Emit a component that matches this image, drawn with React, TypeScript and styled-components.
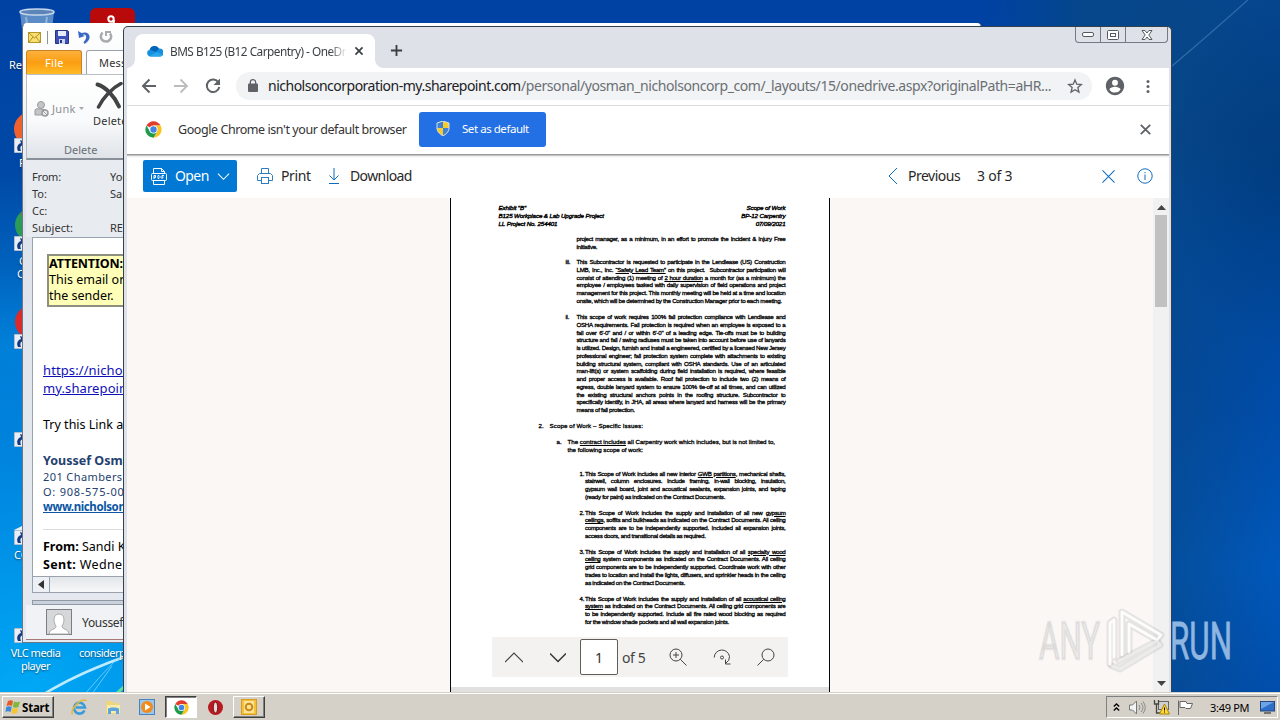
import { ReactNode } from "react";
import styled, { createGlobalStyle } from "styled-components";

const GlobalStyle = createGlobalStyle`
    * {
        box-sizing: border-box;
    }

    body {
        margin: 0;
        overflow: hidden;
        font-family: "Noto Sans", "Open Sans", sans-serif;
    }

    svg {
        display: block;
        flex: none;
    }
`;

const Screen = styled.div`
    position: relative;
    display: flex;
    flex-direction: column;
    width: 1280px;
    height: 720px;
    overflow: hidden;
`;

const Desktop = styled.div`
    position: relative;
    flex: 1;
    overflow: hidden;
    background:
        radial-gradient(ellipse 500px 420px at 2% 100%, #00a8f5 0%, #0097eccc 45%, #0080da00 100%),
        linear-gradient(180deg, #0042a4 0%, #0049a6 25%, #0078d2 50%, #0058bd 75%, #0058bd 100%);
`;

const RightWallpaper = styled.div`
    position: absolute;
    top: 0;
    left: 980px;
    right: 0;
    bottom: 0;
    background:
        radial-gradient(ellipse 110px 180px at 100% 25%, #00397aaa 0%, #00397a00 100%),
        linear-gradient(90deg, #00469400 0%, #09478488 65%, #04448400 100%),
        linear-gradient(180deg, #04468f 0%, #044389 20%, #00489c 33%, #004caa 60%, #0058bb 82%, #004ead 100%);
    mask-image: linear-gradient(90deg, transparent 0, #000 100px);
`;

const Swoosh = styled.svg`
    position: absolute;
    left: 0;
    top: 0;
`;

/* items placed freely on the desktop */
const DesktopItem = styled.div<{ $x: number; $y: number }>`
    position: absolute;
    left: ${(p) => p.$x}px;
    top: ${(p) => p.$y}px;
`;

const DesktopLabel = styled.div<{ $w?: number; $ls?: number }>`
    width: ${(p) => (p.$w ? p.$w + "px" : "auto")};
    color: #fff;
    font-size: 11px;
    line-height: 13px;
    letter-spacing: ${(p) => p.$ls || 0}px;
    text-align: center;
    white-space: nowrap;
    text-shadow: 0 1px 2px #0008;
`;

const Label = styled.span<{ $w?: number; $size?: number; $color?: string; $ls?: number; $bold?: boolean }>`
    flex: none;
    width: ${(p) => (p.$w ? p.$w + "px" : "auto")};
    font-size: ${(p) => p.$size || 12}px;
    color: ${(p) => p.$color || "#333"};
    letter-spacing: ${(p) => p.$ls || 0}px;
    font-weight: ${(p) => (p.$bold ? 700 : 400)};
    white-space: nowrap;
`;

/* ---------- mail window ---------- */

const MailWindow = styled.div`
    position: absolute;
    left: 22px;
    top: 23px;
    width: 960px;
    height: 620px;
    display: flex;
    flex-direction: column;
    padding: 0 3px 2px;
    border: 1px solid #6c7684;
    border-top-color: #fff;
    border-radius: 5px 5px 0 0;
    background: linear-gradient(180deg, #fff 0%, #f8f9fb 8%, #dee3eb 30%, #e6e9ef 100%);
    overflow: hidden;
`;

const QuickBar = styled.div`
    display: flex;
    align-items: center;
    height: 26px;
    padding-left: 2px;
`;

const QuickDivider = styled.div`
    width: 1px;
    height: 13px;
    margin: 0 7px 0 6px;
    background: #8b929b;
`;

const RibbonTabs = styled.div`
    display: flex;
    height: 24px;
    gap: 4px;
`;

const RibbonTab = styled.div<{ $file?: boolean }>`
    width: ${(p) => (p.$file ? 56 : 80)}px;
    padding: 3px 0 0 ${(p) => (p.$file ? 18 : 12)}px;
    border: 1px solid ${(p) => (p.$file ? "#c8822a" : "#9aa1ab")};
    border-bottom: 0;
    border-radius: 3px 3px 0 0;
    background: ${(p) => (p.$file ? "linear-gradient(180deg, #fdb13c 0%, #fb9d12 50%, #ffbb25 100%)" : "#fff")};
    line-height: 15px;
`;

const Ribbon = styled.div`
    display: flex;
    flex-direction: column;
    height: 86px;
    border-top: 1px solid #b9bec6;
    border-left: 1px solid #b9bec6;
    border-bottom: 2px solid #8a9099;
    background: linear-gradient(180deg, #fff 0%, #f9fafb 55%, #dfe3e8 100%);
`;

const RibbonRow = styled.div`
    display: flex;
    height: 68px;
    padding-left: 7px;
`;

const JunkButton = styled.div`
    display: flex;
    align-items: center;
    gap: 3px;
    width: 59px;
`;

const DeleteButton = styled.div`
    display: flex;
    flex-direction: column;
    padding-top: 7px;
    line-height: 16px;

    svg {
        margin: 0 0 3px 2px;
    }
`;

const GroupName = styled.div`
    padding-left: 37px;
    line-height: 16px;

    span {
        display: block;
    }
`;

const HeaderFields = styled.div`
    height: 77px;
    padding: 8px 0 0 6px;
    background: #e8ebf0;
`;

const FieldRow = styled.div`
    display: flex;
    line-height: 17px;
`;

const MailBody = styled.div`
    display: flex;
    flex-direction: column;
    height: 340px;
    margin-left: 6px;
    padding: 16px 0 0 10px;
    border: 1px solid #9aa2ae;
    background: #fff;
`;

const Attention = styled.div`
    display: flex;
    flex-direction: column;
    width: 500px;
    height: 53px;
    margin-left: 4px;
    border: 2px solid #8f8f80;
    background: #ffffb8;
    line-height: 16px;
`;

const MailLine = styled.div<{ $h: number; $mt?: number; $link?: boolean }>`
    height: ${(p) => p.$h}px;
    margin-top: ${(p) => p.$mt || 0}px;
    line-height: ${(p) => p.$h}px;
    white-space: nowrap;

    span {
        text-decoration: ${(p) => (p.$link ? "underline" : "none")};
    }
`;

const MailRule = styled.div`
    height: 1px;
    margin: 16px 0 6px;
    background: #ddd;
`;

const MailScroll = styled.div`
    display: flex;
    height: 16px;
    margin-left: 6px;
    border: 1px solid #9aa2ae;
    border-top: 0;
    background: linear-gradient(180deg, #e2e5e9, #f7f8f9);
`;

const MailScrollButton = styled.div`
    display: flex;
    align-items: center;
    justify-content: center;
    width: 17px;
    border-right: 1px solid #9aa2ae;
    background: #edf0f4;
`;

const MailSplitter = styled.div`
    height: 5px;
    margin: 7px 0 0 6px;
    border: 1px solid #8f98a6;
    background: #cbd1db;
`;

const PeoplePane = styled.div`
    display: flex;
    flex: 1;
    align-items: center;
    gap: 10px;
    padding-left: 20px;
    border-bottom: 1px solid #a77;
    background: #f0f2f5;
`;

/* ---------- browser window ---------- */

const BrowserWindow = styled.div`
    position: absolute;
    left: 123px;
    top: 26px;
    width: 1049px;
    height: 667px;
    display: flex;
    flex-direction: column;
    padding: 0 2px 0 3px;
    border: 1px solid #33414e;
    border-bottom: 0;
    border-radius: 5px 5px 0 0;
    background: #dee1e7;
    overflow: hidden;
`;

const TabStrip = styled.div`
    display: flex;
    align-items: flex-end;
    height: 41px;
    padding-left: 8px;
`;

const BrowserTab = styled.div`
    position: relative;
    display: flex;
    align-items: center;
    width: 240px;
    height: 34px;
    padding: 0 11px 1px 12px;
    border-radius: 8px 8px 0 0;
    background: #fff;

    &::before,
    &::after {
        content: "";
        position: absolute;
        bottom: 0;
        width: 8px;
        height: 8px;
    }

    &::before {
        left: -8px;
        background: radial-gradient(circle at 0 0, transparent 7.5px, #fff 8px);
    }

    &::after {
        right: -8px;
        background: radial-gradient(circle at 100% 0, transparent 7.5px, #fff 8px);
    }
`;

const TabTitle = styled.div`
    width: 177px;
    margin: 0 7px 0 7px;
    overflow: hidden;
    font-size: 11.8px;
    letter-spacing: -0.5px;
    color: #3c4043;
    white-space: nowrap;
    mask-image: linear-gradient(90deg, #000 160px, transparent 177px);
`;

const NewTab = styled.div`
    padding: 0 0 11px 15px;
`;

const Captions = styled.div`
    display: flex;
    align-self: flex-start;
    height: 16px;
    margin: 0 1px 0 auto;
    border: 1px solid #737a83;
    border-top: 0;
    border-radius: 0 0 4px 4px;
`;

const Caption = styled.div<{ $w: number }>`
    display: flex;
    align-items: center;
    justify-content: center;
    width: ${(p) => p.$w}px;

    & + & {
        border-left: 1px solid #737a83;
    }
`;

const NavBar = styled.div`
    display: flex;
    align-items: center;
    height: 38px;
    padding: 0 13px 2px 14px;
    border-bottom: 1px solid #d9dbde;
    background: #fff;
`;

const NavIcons = styled.div`
    display: flex;
    gap: 16px;
    margin-right: 15px;
`;

const Omnibox = styled.div`
    display: flex;
    align-items: center;
    width: 856px;
    height: 28px;
    margin-right: 12px;
    padding: 0 9px 0 12px;
    border-radius: 14px;
    background: #f1f3f4;
`;

const Url = styled.div`
    display: flex;
    flex: 1;
    margin-left: 10px;
`;

const InfoBar = styled.div`
    display: flex;
    align-items: center;
    height: 48px;
    padding: 0 18px 2px 18px;
    background: #fff;
`;

const DefaultButton = styled.div`
    display: flex;
    align-items: center;
    gap: 12px;
    width: 127px;
    height: 35px;
    margin-right: auto;
    padding: 0 0 1px 17px;
    border-radius: 3px;
    background: #2370e5;
`;

const BarShadow = styled.div`
    height: 4px;
    background: linear-gradient(180deg, #929496 0, #a5a7a9 30%, #ededed 50%, #fff 100%);
`;

const CommandBar = styled.div`
    display: flex;
    align-items: center;
    height: 40px;
    padding: 0 16px 4px;
    background: #fff;

    span {
        padding-bottom: 1px;
    }
`;

const OpenButton = styled.div`
    display: flex;
    align-items: center;
    width: 94px;
    height: 32px;
    margin-right: 20px;
    padding-left: 8px;
    border-radius: 2px;
    background: #0078d4;
`;

const Command = styled.div<{ $gap: number; $mr?: number; $ml?: number }>`
    display: flex;
    align-items: center;
    gap: ${(p) => p.$gap}px;
    margin-right: ${(p) => p.$mr || 0}px;
    margin-left: ${(p) => p.$ml || 0}px;
`;

const Spacer = styled.div`
    flex: 1;
`;

const Viewer = styled.div`
    position: relative;
    display: flex;
    flex: 1;
    justify-content: center;
    background: #faf7f5;
    overflow: hidden;
`;

const Page = styled.div`
    width: 380px;
    height: 495px;
    margin-left: -17px;
    padding: 6px 43px 0 48px;
    border: solid #0a0a0a;
    border-width: 0 1px 0 1.5px;
    background: linear-gradient(180deg, #fff 489px, #e1e0df 489px);
    font-family: "Liberation Sans", Arial, sans-serif;
    font-size: 6.2px;
    line-height: 7.75px;
    color: #000;
    -webkit-text-stroke: 0.3px #000;
`;

const PageHead = styled.div`
    display: flex;
    justify-content: space-between;
    height: 24px;
    font-style: italic;
    line-height: 8px;
    letter-spacing: -0.12px;
    -webkit-text-stroke: 0.4px #000;

    div:last-child {
        text-align: right;
    }
`;

const Clause = styled.div<{ $mt: number; $left: number; $num: number; $ls?: number }>`
    display: flex;
    margin: ${(p) => p.$mt}px 0 0 ${(p) => p.$left}px;
    letter-spacing: ${(p) => (p.$ls === undefined ? -0.3 : p.$ls)}px;

    > div:first-child {
        flex: none;
        width: ${(p) => p.$num}px;
    }

    > div:last-child {
        flex: 1;
        min-width: 0;
    }
`;

const TextLine = styled.div<{ $last?: boolean }>`
    height: 7.75px;
    text-align: justify;
    text-align-last: ${(p) => (p.$last ? "left" : "justify")};
    white-space: nowrap;
`;

const PageTools = styled.div`
    position: absolute;
    left: 365px;
    top: 439px;
    display: flex;
    align-items: center;
    width: 296px;
    height: 40px;
    padding-left: 13px;
    background: #f3f2f1;
`;

const PageInput = styled.div`
    display: flex;
    align-items: center;
    justify-content: center;
    width: 38px;
    height: 36px;
    margin: 0 4px 0 14px;
    border: 1px solid #605e5c;
    border-radius: 2px;
    background: #fff;
    font-size: 14px;
    color: #323130;
`;

const ScrollTrack = styled.div`
    position: absolute;
    right: 0;
    top: 0;
    display: flex;
    flex-direction: column;
    align-items: center;
    width: 16px;
    height: 495px;
    padding: 7px 0;
    background: #f1f1f1;
`;

const ScrollThumb = styled.div`
    width: 12px;
    height: 92px;
    margin: 5px 0 auto;
    background: #c1c1c1;
`;

/* ---------- taskbar ---------- */

const Taskbar = styled.div`
    position: relative;
    display: flex;
    align-items: center;
    height: 28px;
    padding: 1px 2px 0 2px;
    border-top: 1px solid #d4d0c8;
    box-shadow: inset 0 1px #fff;
    background: #d5d0c8;
`;

const StartButton = styled.div`
    display: flex;
    align-items: center;
    gap: 1px;
    width: 52px;
    height: 22px;
    padding-left: 2px;
    border: 1px solid;
    border-color: #fff #404040 #404040 #fff;
    box-shadow: inset -1px -1px #808080;
`;

const TaskButton = styled.div<{ $state?: "active" | "raised" }>`
    display: flex;
    align-items: center;
    justify-content: center;
    width: 32px;
    height: 22px;
    margin-left: 2px;
    border: 1px solid transparent;
    ${(p) => p.$state === "active" && "background: #fff; border-color: #404040 #fff #fff #404040; box-shadow: inset 1px 1px #808080;"}
    ${(p) => p.$state === "raised" && "border-color: #fff #404040 #404040 #fff; box-shadow: inset -1px -1px #808080;"}
`;

const TaskList = styled.div`
    display: flex;
    margin: 0 auto 0 7px;
`;

const Tray = styled.div`
    display: flex;
    align-items: center;
    width: 172px;
    height: 22px;
    padding-left: 6px;
    border: 1px solid;
    border-color: #808080 #fff #fff #808080;

    svg {
        margin-right: 7px;
    }
`;

const Watermark = styled.svg`
    position: absolute;
    left: 1030px;
    top: 600px;
`;

function Chevron({ d, size = 14, color = "#0f6cbd", w = 1.1 }: { d: string; size?: number; color?: string; w?: number }) {
    return (
        <svg width={size} height={size} viewBox="0 0 14 14" fill="none" stroke={color} strokeWidth={w}>
            <path d={d} />
        </svg>
    );
}

function ChromeLogo({ size }: { size: number }) {
    return (
        <svg width={size} height={size} viewBox="0 0 48 48">
            <circle cx="24" cy="24" r="23" fill="#fff" />
            <path d="M24 24 4.1 12.5A23 23 0 0 1 43.9 12.5H24z" fill="#e33b2e" />
            <path d="M24 12.5h19.9A23 23 0 0 1 24 47l10-17.2z" fill="#fcc31e" />
            <path d="M4.1 12.5 14 29.8 24 35.5 34 29.8 24 47A23 23 0 0 1 4.1 12.5z" fill="#1e9a4b" />
            <circle cx="24" cy="24" r="11.5" fill="#fff" />
            <circle cx="24" cy="24" r="9" fill="#4285e8" />
        </svg>
    );
}

function ShortcutArrow() {
    return (
        <svg width="14" height="15" viewBox="0 0 14 15">
            <path d="M0 0h14v15H0z" fill="#e8eef5" stroke="#7790aa" />
            <path d="M4 13c-2-4 0-7 3-8L6 2l6 2-2 6-1-3c-3 1-3 3-2 6z" fill="#123a82" />
        </svg>
    );
}

function DesktopIcons() {
    return (
        <>
            <DesktopItem $x={19} $y={8}>
                <svg width="37" height="30" viewBox="0 0 37 30">
                    <path d="M1 4l3 26h28l3-26z" fill="#7ba4d2" opacity=".75" />
                    <ellipse cx="18" cy="4" rx="17" ry="3" fill="#5d85b8" stroke="#c4d7ec" strokeWidth="1.5" />
                    <path d="M7 9l3 20M28 9l-3 20" stroke="#b4d0ec" strokeWidth="2" opacity=".6" />
                </svg>
            </DesktopItem>
            <DesktopItem $x={90} $y={8}>
                <svg width="45" height="30" viewBox="0 0 45 30">
                    <rect width="45" height="34" rx="6" fill="#b80a0a" />
                    <circle cx="21" cy="11" r="2.7" fill="none" stroke="#fff" strokeWidth="2" />
                    <path d="M24 12c0 4-1 5-4 6" fill="none" stroke="#fff" strokeWidth="2" />
                </svg>
            </DesktopItem>
            <DesktopItem $x={9} $y={58}><DesktopLabel>Recycle</DesktopLabel></DesktopItem>
            <DesktopItem $x={14} $y={112}>
                <svg width="28" height="34" viewBox="0 0 28 34"><circle cx="17" cy="17" r="17" fill="#f0622d" /></svg>
            </DesktopItem>
            <DesktopItem $x={14} $y={138}><ShortcutArrow /></DesktopItem>
            <DesktopItem $x={19} $y={156}><DesktopLabel>Firefox</DesktopLabel></DesktopItem>
            <DesktopItem $x={15} $y={208}>
                <svg width="28" height="34" viewBox="0 0 28 34">
                    <circle cx="17" cy="17" r="17" fill="#2b9c57" />
                    <path d="M5 6l12-6v10z" fill="#c94b36" />
                </svg>
            </DesktopItem>
            <DesktopItem $x={14} $y={236}><ShortcutArrow /></DesktopItem>
            <DesktopItem $x={19} $y={254}><DesktopLabel>Google</DesktopLabel></DesktopItem>
            <DesktopItem $x={17} $y={267}><DesktopLabel>Chrome</DesktopLabel></DesktopItem>
            <DesktopItem $x={15} $y={305}>
                <svg width="28" height="34" viewBox="0 0 28 34"><circle cx="17" cy="17" r="17" fill="#d92b2b" /></svg>
            </DesktopItem>
            <DesktopItem $x={14} $y={334}><ShortcutArrow /></DesktopItem>
            <DesktopItem $x={14} $y={432}><ShortcutArrow /></DesktopItem>
            <DesktopItem $x={14} $y={524}>
                <svg width="14" height="8" viewBox="0 0 14 8"><path d="M0 6l10-5v7z" fill="#e8eef5" /></svg>
            </DesktopItem>
            <DesktopItem $x={14} $y={530}><ShortcutArrow /></DesktopItem>
            <DesktopItem $x={14} $y={548}><DesktopLabel>CCleaner</DesktopLabel></DesktopItem>
            <DesktopItem $x={14} $y={628}><ShortcutArrow /></DesktopItem>
            <DesktopItem $x={5} $y={646}><DesktopLabel $w={61} $ls={-0.5}>VLC media<br />player</DesktopLabel></DesktopItem>
            <DesktopItem $x={79} $y={646}><DesktopLabel $ls={-0.55}>considerpay</DesktopLabel></DesktopItem>
        </>
    );
}

function Mail() {
    return (
        <MailWindow>
            <QuickBar>
                <svg width="13" height="11" viewBox="0 0 13 11">
                    <rect x=".5" y=".5" width="12" height="10" fill="#f8df72" stroke="#b59428" />
                    <path d="M1 1l5.500 5L12 1M1 10l4-5M12 10L8 5" fill="none" stroke="#b08d22" />
                </svg>
                <QuickDivider />
                <svg width="14" height="14" viewBox="0 0 14 14">
                    <path d="M.5.500h12l1 1v12H.5z" fill="#3f51b8" stroke="#26357f" />
                    <path d="M3 1h8v5H3z" fill="#e7ecfa" />
                    <path d="M4 9h6v5H4z" fill="#cdd5f0" />
                    <path d="M5 10h2v3H5z" fill="#26357f" />
                </svg>
                <svg width="14" height="14" viewBox="0 0 14 14" style={{ marginLeft: 8 }}>
                    <path d="M1 1l1 7 6-2-2.500-1c3-2 6 2 1 7l1 2c9-5 5-14-3-11z" fill="#3c68c4" />
                </svg>
                <svg width="14" height="14" viewBox="0 0 14 14" style={{ marginLeft: 8 }} fill="none" stroke="#a9abae" strokeWidth="2.500">
                    <path d="M3.500 2.500c-4 5 0 9 3.500 9s7-4 4-8" />
                    <path d="M7 6V2h5" strokeWidth="2" />
                </svg>
            </QuickBar>
            <RibbonTabs>
                <RibbonTab $file><Label $size={11} $color="#fff" $ls={0.3}>File</Label></RibbonTab>
                <RibbonTab><Label $size={11} $ls={0.2}>Message</Label></RibbonTab>
            </RibbonTabs>
            <Ribbon>
                <RibbonRow>
                    <JunkButton>
                        <svg width="15" height="16" viewBox="0 0 15 16" fill="#c4c5c7" stroke="#999b9d">
                            <circle cx="7" cy="4" r="3.500" />
                            <path d="M1 14V9c1-2 3-1 6-1l5 1v5z" />
                            <circle cx="11" cy="12" r="3" fill="#eee" strokeWidth="1.500" />
                            <path d="M9 10l4 4" />
                        </svg>
                        <Label $size={11} $color="#8c8f94" $ls={0.3}>Junk</Label>
                        <svg width="5" height="3" viewBox="0 0 5 3"><path d="M0 0h5L2.500 3z" fill="#aaa" /></svg>
                    </JunkButton>
                    <DeleteButton>
                        <svg width="29" height="28" viewBox="0 0 29 28" fill="none" stroke="#414345" strokeLinecap="round">
                            <path d="M2.500 2.500C11 5 20 15 24 24.500" strokeWidth="4" />
                            <path d="M26 1.500C17 6 8 16 3.500 25" strokeWidth="3.500" />
                        </svg>
                        <Label $size={11} $ls={0.2}>Delete</Label>
                    </DeleteButton>
                </RibbonRow>
                <GroupName><Label $size={11} $color="#6a6f77" $ls={0}>Delete</Label></GroupName>
            </Ribbon>
            <HeaderFields>
                <FieldRow><Label $size={11} $w={78} $ls={-0.2}>From:</Label><Label $size={11}>Youssef Osman</Label></FieldRow>
                <FieldRow><Label $size={11} $w={78}>To:</Label><Label $size={11}>Sandi King</Label></FieldRow>
                <FieldRow><Label $size={11}>Cc:</Label></FieldRow>
                <FieldRow><Label $size={11} $w={78}>Subject:</Label><Label $size={11}>RE: BMS</Label></FieldRow>
            </HeaderFields>
            <MailBody>
                <Attention>
                    <Label $size={12.5} $color="#000" $bold $ls={-0.15}>ATTENTION:</Label>
                    <Label $size={12.5} $color="#000">This email originated</Label>
                    <Label $size={12.5} $color="#000">the sender.</Label>
                </Attention>
                <MailLine $h={18} $mt={53} $link><Label $size={13} $color="#1010b8" $ls={0.1}>https://nicholsoncorp</Label></MailLine>
                <MailLine $h={18} $link><Label $size={13} $color="#1010b8" $ls={0.1}>my.sharepoint.com</Label></MailLine>
                <MailLine $h={18} $mt={18}><Label $size={12.5} $color="#000">Try this Link and</Label></MailLine>
                <MailLine $h={18} $mt={18}><Label $size={12.5} $color="#24416f" $bold>Youssef Osman</Label></MailLine>
                <MailLine $h={15}><Label $size={11} $color="#24416f" $ls={0.4}>201 Chambers Brook</Label></MailLine>
                <MailLine $h={15}><Label $size={11} $color="#24416f" $ls={0.75}>O: 908-575-0020</Label></MailLine>
                <MailLine $h={15} $link><Label $size={11.5} $color="#0b57a4" $bold $ls={-0.4}>www.nicholsoncorp.com</Label></MailLine>
                <MailRule />
                <MailLine $h={18}><Label $size={12.500} $color="#000"><b>From:</b> Sandi King</Label></MailLine>
                <MailLine $h={18}><Label $size={12.500} $color="#000" $ls={0.35}><b>Sent:</b> Wednesday</Label></MailLine>
            </MailBody>
            <MailScroll>
                <MailScrollButton>
                    <svg width="6" height="9" viewBox="0 0 6 9"><path d="M6 0v9L0 4.500z" fill="#333" /></svg>
                </MailScrollButton>
            </MailScroll>
            <MailSplitter />
            <PeoplePane>
                <svg width="26" height="26" viewBox="0 0 26 26">
                    <rect x=".5" y=".5" width="25" height="25" fill="#d5d7d9" stroke="#7a7e83" />
                    <path d="M3 25c1-6 7-4 7-8-3-4-3-12 3-12s6 8 3 12c0 4 6 2 7 8z" fill="#fff" stroke="#aaa" />
                </svg>
                <Label $size={12} $ls={-0.3}>Youssef Osman</Label>
            </PeoplePane>
        </MailWindow>
    );
}

type Block = { mt: number; left: number; num: number; mark?: string; lines: ReactNode[]; loose?: boolean; ls?: number };

const blocks: Block[] = [
    {
        mt: 7, left: 78, num: 0,
        lines: ["project manager, as a minimum, in an effort to promote the Incident & Injury Free", "initiative."],
    },
    {
        mt: 7.5, left: 67, num: 11, mark: "iii.",
        lines: [
            "This Subcontractor is requested to participate in the Lendlease (US) Construction",
            <>LMB, Inc., Inc. <u>“Safety Lead Team”</u> on this project.&nbsp; Subcontractor participation will</>,
            <>consist of attending (1) meeting of <u>2 hour duration</u> a month for (as a minimum) the</>,
            "employee / employees tasked with daily supervision of field operations and project",
            "management for this project.  This monthly meeting will be held at a time and location",
            "onsite, which will be determined by the Construction Manager prior to each meeting.",
        ],
    },
    {
        mt: 8.5, left: 67, num: 11, mark: "ii.",
        lines: [
            "This scope of work requires 100% fall protection compliance with Lendlease and",
            "OSHA requirements.  Fall protection is required when an employee is exposed to a",
            "fall over 6'-0\" and / or within 6'-0\" of a leading edge.  Tie-offs must be to building",
            "structure and fall / swing radiuses must be taken into account before use of lanyards",
            "is utilized. Design, furnish and install a engineered, certified by a licensed New Jersey",
            "professional engineer; fall protection system complete with attachments to existing",
            "building structural system, compliant with OSHA standards. Use of an articulated",
            "man-lift(s) or system scaffolding during field installation is required, where feasible",
            "and proper access is available.  Roof fall protection to include two (2) means of",
            "egress, double lanyard system to ensure 100% tie-off at all times, and can utilized",
            "the existing structural anchors points in the roofing structure.  Subcontractor to",
            "specifically identify, in JHA, all areas where lanyard and harness will be the primary",
            "means of fall protection.",
        ],
    },
    { mt: 8.2, left: 40, num: 11, mark: "2.", loose: true, ls: 0.1, lines: ["Scope of Work – Specific Issues:"] },
    {
        mt: 8.2, left: 58, num: 11, mark: "a.", loose: true, ls: -0.02,
        lines: [<>The <u>contract includes</u> all Carpentry work which includes, but is not limited to,</>, "the following scope of work:"],
    },
    {
        mt: 16.2, left: 81, num: 5.5, mark: "1.",
        lines: [
            <>This Scope of Work includes all new interior <u>GWB partitions</u>, mechanical shafts,</>,
            "stairwell, column enclosures.  Include framing, in-wall blocking, insulation,",
            "gypsum wall board, joint and acoustical sealants, expansion joints, and taping",
            "(ready for paint) as indicated on the Contract Documents.",
        ],
    },
    {
        mt: 8, left: 81, num: 5.5, mark: "2.",
        lines: [
            <>This Scope of Work includes the supply and installation of all new <u>gypsum</u></>,
            <><u>ceilings</u>, soffits and bulkheads as indicated on the Contract Documents. All ceiling</>,
            "components are to be independently supported.  Included all expansion joints,",
            "access doors, and transitional details as required.",
        ],
    },
    {
        mt: 8, left: 81, num: 5.5, mark: "3.",
        lines: [
            <>This Scope of Work includes the supply and installation of all <u>specialty wood</u></>,
            <><u>ceiling</u> system components as indicated on the Contract Documents. All ceiling</>,
            "grid components are to be independently supported.  Coordinate work with other",
            "trades to location and install the lights, diffusers, and sprinkler heads in the ceiling",
            "as indicated on the Contract Documents.",
        ],
    },
    {
        mt: 8.2, left: 81, num: 5.5, mark: "4.",
        lines: [
            <>This Scope of Work includes the supply and installation of all <u>acoustical ceiling</u></>,
            <><u>system</u> as indicated on the Contract Documents. All ceiling grid components are</>,
            "to be independently supported.  Include all fire rated wood blocking as required",
            "for the window shade pockets and all wall expansion joints.",
        ],
    },
];

function DocumentPage() {
    return (
        <Page>
            <PageHead>
                <div>Exhibit "B"<br />B125 Workplace &amp; Lab Upgrade Project<br />LL Project No. 254401</div>
                <div>Scope of Work<br />BP-12 Carpentry<br />07/09/2021</div>
            </PageHead>
            {blocks.map((b, i) => (
                <Clause key={i} $mt={b.mt} $left={b.left} $num={b.num} $ls={b.ls}>
                    <div>{b.mark}</div>
                    <div>
                        {b.lines.map((line, n) => (
                            <TextLine key={n} $last={b.loose || n === b.lines.length - 1}>{line}</TextLine>
                        ))}
                    </div>
                </Clause>
            ))}
        </Page>
    );
}

function Browser() {
    return (
        <BrowserWindow>
            <TabStrip>
                <BrowserTab>
                    <svg width="16" height="16" viewBox="0 0 16 16">
                        <path d="M3.500 13.500a3.500 3.500 0 0 1-.7-6.900A5 5 0 0 1 12 5.500a4 4 0 0 1 1 8z" fill="#1490df" />
                        <path d="M2.800 6.600A5 5 0 0 1 12 5.500L9 9z" fill="#0364b8" />
                        <path d="M2.500 13l7.500-4 5.500 3c-.5 1-1.500 1.500-2.500 1.500H3.500z" fill="#28a8ea" />
                    </svg>
                    <TabTitle>BMS B125 (B12 Carpentry) - OneDrive</TabTitle>
                    <Chevron d="M2 2l10 10M12 2L2 12" size={10} color="#3c4043" w={2.4} />
                </BrowserTab>
                <NewTab><Chevron d="M7 1v12M1 7h12" size={13} color="#3c4043" w={2} /></NewTab>
                <Captions>
                    <Caption $w={24}>
                        <svg width="12" height="5" viewBox="0 0 12 5"><rect x=".5" y=".5" width="11" height="4" rx="1.500" fill="#fff" stroke="#555b63" /></svg>
                    </Caption>
                    <Caption $w={25}>
                        <svg width="12" height="10" viewBox="0 0 12 10" fill="#fff" stroke="#555b63">
                            <rect x=".5" y=".5" width="11" height="9" rx="1" />
                            <rect x="3.500" y="3.500" width="5" height="3" />
                        </svg>
                    </Caption>
                    <Caption $w={42}>
                        <svg width="12" height="10" viewBox="0 0 12 10">
                            <path d="M1 .5h3l2 2.500L8 .5h3L7.800 5 11 9.500H8L6 7 4 9.500H1L4.200 5z" fill="#fff" stroke="#555b63" />
                        </svg>
                    </Caption>
                </Captions>
            </TabStrip>
            <NavBar>
                <NavIcons>
                    <svg width="16" height="16" viewBox="0 0 16 16" fill="none" stroke="#5f6368" strokeWidth="2"><path d="M15 8H2.500M8.500 1.500L2 8l6.500 6.500" /></svg>
                    <svg width="16" height="16" viewBox="0 0 16 16" fill="none" stroke="#babcbe" strokeWidth="1.800"><path d="M1 8h12.500M7.500 1.500L14 8l-6.500 6.500" /></svg>
                    <svg width="16" height="16" viewBox="0 0 16 16" fill="none" stroke="#5f6368" strokeWidth="2">
                        <path d="M13.500 4.500A6.300 6.300 0 1 0 14.300 9" />
                        <path d="M15 .5V7H8.500z" fill="#5f6368" stroke="none" />
                    </svg>
                </NavIcons>
                <Omnibox>
                    <svg width="10" height="13" viewBox="0 0 10 13">
                        <rect x="0" y="4.500" width="10" height="8.500" rx="1" fill="#5f6368" />
                        <path d="M2.300 5V3.400a2.700 2.700 0 0 1 5.400 0V5" fill="none" stroke="#5f6368" strokeWidth="1.300" />
                    </svg>
                    <Url>
                        <Label $size={14} $w={253} $color="#202124" $ls={-0.5}>nicholsoncorporation-my.sharepoint.com</Label>
                        <Label $size={14} $color="#6b6f74" $ls={-0.42}>/personal/yosman_nicholsoncorp_com/_layouts/15/onedrive.aspx?originalPath=aHR...</Label>
                    </Url>
                    <svg width="16" height="16" viewBox="0 0 24 24" fill="none" stroke="#5f6368" strokeWidth="2">
                        <path d="M12 3l2.700 6.300 6.800.6-5.200 4.500 1.600 6.700-5.900-3.600-5.900 3.600 1.600-6.700-5.200-4.500 6.800-.6z" />
                    </svg>
                </Omnibox>
                <svg width="22" height="22" viewBox="0 0 24 24"><path fill="#5f6368" d="M12 2C6.480 2 2 6.480 2 12s4.480 10 10 10 10-4.480 10-10S17.520 2 12 2zm0 3.200a3.200 3.200 0 1 1 0 6.400 3.200 3.200 0 0 1 0-6.400zm0 14a7.200 7.200 0 0 1-6-3.220c.03-1.990 4-3.080 6-3.080s5.970 1.090 6 3.080A7.200 7.200 0 0 1 12 19.200z" /></svg>
                <Spacer />
                <svg width="16" height="16" viewBox="0 0 16 16" fill="#5f6368">
                    <circle cx="8" cy="3.500" r="1.500" /><circle cx="8" cy="8.500" r="1.500" /><circle cx="8" cy="13.500" r="1.500" />
                </svg>
            </NavBar>
            <InfoBar>
                <ChromeLogo size={17} />
                <Label $size={12.5} $w={241} $color="#333" $ls={-0.43} style={{ marginLeft: 16 }}>Google Chrome isn't your default browser</Label>
                <DefaultButton>
                    <svg width="14" height="15" viewBox="0 0 14 15">
                        <path d="M7 0L13 2v5c0 4-3 6-6 8-3-2-6-4-6-8V2z" fill="#f6cb2e" />
                        <path d="M7 0v7H1V2zM7 7h6c0 4-3 6-6 8z" fill="#3f82d6" />
                        <path d="M7 0L13 2v5c0 4-3 6-6 8-3-2-6-4-6-8V2z" fill="none" stroke="#d7dfe8" />
                    </svg>
                    <Label $size={11.5} $color="#fff" $ls={-0.45}>Set as default</Label>
                </DefaultButton>
                <Chevron d="M1 1l12 12M13 1L1 13" size={11} color="#5f6368" w={2.3} />
            </InfoBar>
            <BarShadow />
            <CommandBar>
                <OpenButton>
                    <svg width="16" height="17" viewBox="0 0 16 17" fill="none" stroke="#fff">
                        <path d="M2.500 5V.5h8l3 3V5M2.500 12.500v4h11v-4M10.500.500v3h3" />
                        <rect x=".5" y="5.500" width="15" height="7" rx="1" />
                        <path d="M3 11V7.500h1.500v2H3M7 7.500v3h1l1-1v-1l-1-1zM11 11V7.500h2M11 9.200h1.500" />
                    </svg>
                    <Label $size={14} $w={34} $color="#fff" $ls={-0.6} style={{ margin: "0 8px" }}>Open</Label>
                    <Chevron d="M1 4l6 6 6-6" size={13} color="#fff" />
                </OpenButton>
                <Command $gap={8} $mr={18}>
                    <svg width="16" height="16" viewBox="0 0 16 16" fill="none" stroke="#2f7dbf">
                        <path d="M4.500 5.500v-5h7v5M4.500 12.500h-4v-5l2-2h11l2 2v5h-4" /><rect x="4.500" y="9.500" width="7" height="6" />
                    </svg>
                    <Label $size={14} $w={29} $color="#292827" $ls={-0.4}>Print</Label>
                </Command>
                <Command $gap={10}>
                    <svg width="12" height="16" viewBox="0 0 12 16" fill="none" stroke="#0f6cbd"><path d="M6 0v12M1.500 7.500L6 12l4.500-4.500M1 15.500h10" /></svg>
                    <Label $size={14} $color="#292827" $ls={-0.6}>Download</Label>
                </Command>
                <Spacer />
                <Command $gap={10} $mr={17}>
                    <svg width="10" height="16" viewBox="0 0 10 16" fill="none" stroke="#0f6cbd"><path d="M9 0L1 8l8 8" /></svg>
                    <Label $size={14} $w={52} $color="#292827" $ls={-0.5}>Previous</Label>
                </Command>
                <Label $size={14} $w={36} $color="#292827" $ls={-0.2}>3 of 3</Label>
                <Command $gap={22} $ml={89}>
                    <Chevron d="M.500.500l13 13M13.500.500l-13 13" size={13} />
                    <svg width="16" height="16" viewBox="0 0 16 16" fill="none" stroke="#0f6cbd">
                        <circle cx="8" cy="8" r="7.200" /><path d="M8 6.500V12M8 4v1.200" />
                    </svg>
                </Command>
            </CommandBar>
            <Viewer>
                <DocumentPage />
                <PageTools>
                    <Chevron d="M0 11l7-7 7 7" size={18} color="#444" w={0.9} />
                    <Spacer />
                    <Chevron d="M0 4l7 7 7-7" size={16} color="#333" w={1.3} />
                    <PageInput>1</PageInput>
                    <Label $size={14} $w={25} $color="#444" $ls={-0.4}>of 5</Label>
                    <svg width="18" height="18" viewBox="0 0 18 18" fill="none" stroke="#444" style={{ marginLeft: 22 }}>
                        <circle cx="7" cy="7" r="6" /><path d="M11.300 11.300L17.500 17.500M7 4v6M4 7h6" />
                    </svg>
                    <svg width="18" height="18" viewBox="0 0 18 18" fill="none" stroke="#444" style={{ marginLeft: 26 }}>
                        <path d="M1.200 9.500A7.700 7.700 0 0 1 16.500 8.500Q17 12.500 12.500 15.500M12.500 11.500v4.500h5" /><circle cx="9" cy="9.500" r="1.500" />
                    </svg>
                    <svg width="18" height="18" viewBox="0 0 18 18" fill="none" stroke="#444" style={{ margin: "0 13px 0 26px" }}>
                        <circle cx="11" cy="7" r="6" /><path d="M6.700 11.300L.500 17.500" />
                    </svg>
                </PageTools>
                <ScrollTrack>
                    <svg width="9" height="5" viewBox="0 0 9 5"><path d="M0 5h9L4.500 0z" fill="#444" /></svg>
                    <ScrollThumb />
                    <svg width="9" height="5" viewBox="0 0 9 5"><path d="M0 0h9L4.500 5z" fill="#444" /></svg>
                </ScrollTrack>
            </Viewer>
        </BrowserWindow>
    );
}

function Bar() {
    return (
        <Taskbar>
            <StartButton>
                <svg width="16" height="16" viewBox="0 0 16 16">
                    <path d="M3 2c2-1 3-1 5 0L7 7C5 6 4 6 1.500 7z" fill="#e35a2b" />
                    <path d="M9 2.500c2 1 4 1 6 0L13.500 8c-2 1-4 1-5.700 0z" fill="#7fb83a" />
                    <path d="M1.300 8c2-1 4-1 5.500 0L5.500 13c-2-1-3-1-5 0z" fill="#3a8ad8" />
                    <path d="M7.500 9c2 1 4 1 5.700 0L12 14c-2 1-4 1-5.700 0z" fill="#f7c52d" />
                </svg>
                <Label $size={11.5} $color="#000" $bold $ls={-0.2}>Start</Label>
            </StartButton>
            <TaskList>
                <TaskButton>
                    <svg width="17" height="17" viewBox="0 0 17 17" fill="none">
                        <path d="M13.500 11.500A5.500 5.500 0 1 1 14 8.500H5" stroke="#3a9bdc" strokeWidth="2.600" />
                        <path d="M1.500 15.500C-1 11 9-1 15.500 1.500" stroke="#e2b93a" strokeWidth="1.500" />
                    </svg>
                </TaskButton>
                <TaskButton>
                    <svg width="16" height="15" viewBox="0 0 16 15">
                        <path d="M1 1h6l1 2h6v11H1z" fill="#f0d67a" /><path d="M2 5h13v8H2z" fill="#f9ebae" />
                        <path d="M3 14V9c0-2 11-2 11 0v5h-3v-3H6v3z" fill="#5ba6dd" />
                    </svg>
                </TaskButton>
                <TaskButton>
                    <svg width="16" height="16" viewBox="0 0 16 16">
                        <rect x=".5" y=".5" width="15" height="15" fill="#9cc7ea" stroke="#4584bd" />
                        <circle cx="8" cy="8" r="6" fill="#f28b1c" /><path d="M6 4.500v7L11.500 8z" fill="#fff" />
                    </svg>
                </TaskButton>
                <TaskButton $state="active"><ChromeLogo size={15} /></TaskButton>
                <TaskButton>
                    <svg width="15" height="15" viewBox="0 0 15 15">
                        <circle cx="7.500" cy="7.500" r="7.500" fill="#b81a1f" /><ellipse cx="7.500" cy="7.500" rx="2.200" ry="5.500" fill="#e9dada" stroke="#6e0b0e" />
                    </svg>
                </TaskButton>
                <TaskButton $state="raised">
                    <svg width="16" height="16" viewBox="0 0 16 16">
                        <rect x=".5" y=".5" width="15" height="15" fill="#f5c03a" stroke="#d99c1e" />
                        <rect x="3" y="2" width="10" height="12" fill="#fbe39a" /><circle cx="8" cy="8" r="3.300" fill="none" stroke="#c98a10" strokeWidth="2" />
                    </svg>
                </TaskButton>
            </TaskList>
            <Tray>
                <svg width="7" height="9" viewBox="0 0 7 9" fill="none" stroke="#000" strokeWidth="1.300" style={{ marginRight: 9 }}>
                    <path d="M.8 3.500l2.700-2.500 2.700 2.500M.8 7.500L3.500 5l2.700 2.500" />
                </svg>
                <svg width="17" height="15" viewBox="0 0 17 15" fill="none" stroke="#777">
                    <path d="M.5 5h3l4-4v13l-4-4h-3z" fill="#f4f4f4" /><path d="M10 5q2 2.500 0 5M12 3q4 4.500 0 9M14 1.500q4.500 6 0 12" stroke="#888" />
                </svg>
                <svg width="17" height="16" viewBox="0 0 17 16">
                    <rect x="5.500" y="2.500" width="10" height="8" fill="#cfcfcf" stroke="#666" />
                    <path d="M1.500 1v4h4V1M3.500 5v9h4" fill="none" stroke="#444" strokeWidth="1.300" />
                    <path d="M11.500 5l5 10h-10z" fill="#ffd83a" stroke="#a98500" /><path d="M11.500 8.500v3M11.500 12.500v1" stroke="#000" />
                </svg>
                <svg width="17" height="15" viewBox="0 0 17 15" fill="#fff" stroke="#666">
                    <path d="M1.500 15V.5M3 1.500h6l1 2h5.500l-2 5H9l-1-1H3z" />
                </svg>
                <Label $size={11} $w={40} $color="#000" $ls={-0.3} style={{ margin: "0 10px 0 9px" }}>3:49 PM</Label>
                <svg width="15" height="13" viewBox="0 0 15 13">
                    <rect x=".5" y=".5" width="14" height="9.500" fill="#2d6fc8" stroke="#27477c" /><path d="M1 1h13L1 8z" fill="#6ea4e6" /><path d="M4 12h7" stroke="#555" strokeWidth="1.500" />
                </svg>
            </Tray>
        </Taskbar>
    );
}

function App() {
    return (
        <Screen>
            <GlobalStyle />
            <Desktop>
                <RightWallpaper />
                <Swoosh width="1280" height="692" viewBox="0 0 1280 692" fill="none">
                    <path d="M44 694Q80 672 130 655" stroke="#bdebff" strokeWidth="2.500" />
                    <path d="M85 694Q98 678 116 660M92 694L112 666" stroke="#8edcff" strokeWidth="1" opacity=".7" />
                    <path d="M116 694l10-9" stroke="#5de0a0" strokeWidth="3" />
                    <path d="M1250 -2Q1210 34 1172 66" stroke="#5c94c8" strokeWidth="1.200" opacity=".5" />
                </Swoosh>
                <DesktopIcons />
                <Mail />
                <Browser />
            </Desktop>
            <Bar />
            <Watermark width="210" height="80" viewBox="0 0 210 80">
                <g fontFamily="Roboto, sans-serif" fontSize="52" strokeLinejoin="round">
                    <text x="9" y="59" textLength="61" lengthAdjust="spacingAndGlyphs" fill="#ebe9e8" stroke="#55555518" strokeWidth="3">ANY</text>
                    <text x="140" y="59" textLength="62" lengthAdjust="spacingAndGlyphs" fill="#8fb6e0" stroke="#8fb6e0" strokeWidth=".8">RUN</text>
                </g>
                <g fill="none" strokeLinejoin="round" strokeLinecap="round">
                    <g stroke="#666" strokeOpacity=".13" strokeWidth="7">
                        <path d="M80 64V23l4-3v37M92 55V12l39 23-4 5-28-16v28" />
                        <path d="M82 66l8 3 40-24-3-4-38 20" />
                    </g>
                    <path d="M80 64V23l4-3v37M92 55V12l39 23-4 5-28-16v28" stroke="#fff" strokeOpacity=".9" strokeWidth="2.800" />
                    <path d="M82 66l8 3 40-24-3-4-38 20" stroke="#eee" strokeOpacity=".8" strokeWidth="2.800" />
                </g>
            </Watermark>
        </Screen>
    );
}

export default App;
